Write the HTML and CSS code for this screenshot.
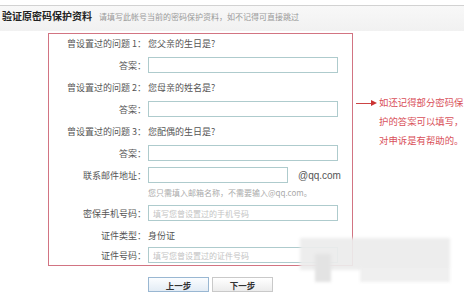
FILE: index.html
```html
<!DOCTYPE html>
<html>
<head>
    <title>验证原密码保护资料</title>
    <link rel="stylesheet" href="styles.css">
</head>
<body>
    <div class="page-head">
        <span class="head-title">验证原密码保护资料</span>
        <span class="head-tip">请填写此帐号当前的密码保护资料，如不记得可直接跳过</span>
    </div>

    <div class="main">
        <div class="form-box">
            <div class="row">
                <label>曾设置过的问题 1：</label>
                <span class="text">您父亲的生日是?</span>
            </div>
            <div class="row">
                <label>答案：</label>
                <input type="text" class="field">
            </div>
            <div class="row">
                <label>曾设置过的问题 2：</label>
                <span class="text">您母亲的姓名是?</span>
            </div>
            <div class="row">
                <label>答案：</label>
                <input type="text" class="field">
            </div>
            <div class="row">
                <label>曾设置过的问题 3：</label>
                <span class="text">您配偶的生日是?</span>
            </div>
            <div class="row">
                <label>答案：</label>
                <input type="text" class="field">
            </div>
            <div class="row">
                <label>联系邮件地址：</label>
                <input type="text" class="field field-short">
                <span class="suffix">@qq.com</span>
            </div>
            <div class="row row-hint">
                <label></label>
                <span class="hint">您只需填入邮箱名称，不需要输入@qq.com。</span>
            </div>
            <div class="row row-phone">
                <label>密保手机号码：</label>
                <input type="text" class="field" placeholder="填写您曾设置过的手机号码">
            </div>
            <div class="row">
                <label>证件类型：</label>
                <span class="text">身份证</span>
            </div>
            <div class="row row-id">
                <label>证件号码：</label>
                <input type="text" class="field" placeholder="填写您曾设置过的证件号码">
            </div>
        </div>

        <div class="note">
            <span class="arrow"></span>
            <p>如还记得部分密码保<br>护的答案可以填写，<br>对申诉是有帮助的。</p>
        </div>
    </div>

    <div class="buttons">
        <button class="btn btn-prev">上一步</button>
        <button class="btn">下一步</button>
    </div>

    <div class="smudge">
        <div class="smudge-a"></div>
        <div class="smudge-b"></div>
        <div class="smudge-c"></div>
    </div>
</body>
</html>
```

FILE: styles.css
```css
body {
    margin: 0;
    padding-top: 5px;
    background: #fff;
    font-family: "Noto Sans CJK SC", "Liberation Sans", sans-serif;
    font-size: 9px;
    color: #333;
    position: relative;
    width: 464px;
    height: 296px;
    overflow: hidden;
}
.page-head {
    border-top: 1px solid #d2d2d2;
    height: 25px;
    background: linear-gradient(#f8f8f8, #f1f1f1);
    padding-left: 2px;
    line-height: 20px;
    white-space: nowrap;
}
.head-title {
    font-size: 10px;
    font-weight: bold;
    color: #222;
}
.head-tip {
    font-size: 8px;
    color: #999;
    margin-left: 5px;
}
.main {
    display: flex;
    margin-top: 2px;
}
.form-box {
    margin-left: 48px;
    width: 303px;
    border: 1px solid #d27482;
    padding: 1px 0 2px;
    display: flex;
    flex-direction: column;
    gap: 6px;
}
.row {
    display: flex;
    align-items: center;
    height: 16px;
}
.row label {
    width: 97px;
    flex: none;
    text-align: right;
    margin-right: 2px;
    color: #555;
}
.text {
    color: #555;
}
.field {
    width: 190px;
    height: 16px;
    box-sizing: border-box;
    border: 1px solid #aecbcd;
    padding: 0 4px;
    margin: 0;
    font-family: inherit;
    font-size: 8px;
    outline: none;
}
.field::placeholder {
    color: #c4c4c4;
}
.field-short {
    width: 140px;
}
.suffix {
    margin-left: 10px;
    font-family: "Liberation Sans", sans-serif;
    font-size: 10px;
    color: #555;
}
.row-hint {
    height: 15px;
    margin-top: -4px;
}
.hint {
    font-size: 8px;
    color: #aaa;
}
.row-phone {
    margin-top: -1px;
}
.row-id {
    margin-top: -2px;
}
.note {
    margin-top: 60px;
    display: flex;
    align-items: flex-start;
}
.arrow {
    position: relative;
    display: block;
    width: 16px;
    height: 1px;
    margin: 10px 0 0 3px;
    background: #c44;
}
.arrow::after {
    content: "";
    position: absolute;
    left: 15px;
    top: -3px;
    border-left: 6px solid #c33;
    border-top: 3.5px solid transparent;
    border-bottom: 3.5px solid transparent;
}
.note p {
    margin: 0 0 0 7px;
    font-size: 9.4px;
    line-height: 19px;
    color: #d9505a;
    white-space: nowrap;
}
.buttons {
    display: flex;
    gap: 3px;
    margin: 11px 0 0 148px;
}
.btn {
    width: 61px;
    height: 15px;
    padding: 0;
    border: 1px solid #c9c9c9;
    background: linear-gradient(#ffffff, #ececec);
    font-family: inherit;
    font-size: 8.5px;
    font-weight: bold;
    color: #333;
}
.btn-prev {
    border-color: #99b7d2;
    background: linear-gradient(#fbfdff, #e3ecf5);
}
.smudge {
    position: absolute;
    left: 300px;
    top: 238px;
    width: 150px;
    height: 44px;
    filter: blur(1.5px);
}
.smudge div {
    position: absolute;
}
.smudge-a {
    left: 0;
    top: 0;
    width: 150px;
    height: 32px;
    background: rgba(236, 236, 236, 0.93);
}
.smudge-b {
    left: 15px;
    top: 16px;
    width: 16px;
    height: 28px;
    background: #e3e3e3;
}
.smudge-c {
    left: 60px;
    top: 30px;
    width: 90px;
    height: 14px;
    background: #efefef;
}
```
